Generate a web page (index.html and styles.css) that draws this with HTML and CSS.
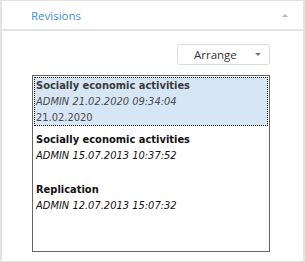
FILE: index.html
```html
<!DOCTYPE html>
<html lang="en">
<head>
    <title>Revisions</title>
    <link rel="stylesheet" href="styles.css">
</head>
<body>
    <div class="panel">
        <div class="panel-header">
            <span class="panel-title">Revisions</span>
            <span class="collapse-arrow"></span>
        </div>
        <div class="panel-body">
            <div class="toolbar">
                <button class="dropdown-btn">
                    <span>Arrange</span>
                    <span class="caret"></span>
                </button>
            </div>
            <div class="revision-list">
                <div class="revision revision--selected">
                    <div class="revision-name">Socially economic activities</div>
                    <div class="revision-meta">ADMIN 21.02.2020 09:34:04</div>
                    <div class="revision-date">21.02.2020</div>
                </div>
                <div class="revision">
                    <div class="revision-name">Socially economic activities</div>
                    <div class="revision-meta">ADMIN 15.07.2013 10:37:52</div>
                </div>
                <div class="revision">
                    <div class="revision-name">Replication</div>
                    <div class="revision-meta">ADMIN 12.07.2013 15:07:32</div>
                </div>
            </div>
        </div>
    </div>
</body>
</html>
```

FILE: styles.css
```css
body{
    margin: 0;
    background: #ffffff;
    font-family: "Open Sans", Roboto, sans-serif;
}

.panel{
    height: 262px;
    box-sizing: border-box;
    border: 2px solid #e4e4e4;
    border-bottom-width: 1px;
    border-top-width: 1px;
    display: flex;
    flex-direction: column;
}

.panel-header{
    height: 28px;
    border-bottom: 2px solid #e4e4e4;
    display: flex;
    align-items: center;
    padding: 0 15px 0 29px;
}

.panel-title{
    flex-grow: 1;
    color: #3d8fd8;
    font-size: 11.5px;
}

.collapse-arrow{
    width: 0;
    height: 0;
    border-left: 3px solid transparent;
    border-right: 3px solid transparent;
    border-bottom: 3px solid #b5b5b5;
}

.panel-body{
    padding: 13px 33px 0 30px;
}

.toolbar{
    display: flex;
    justify-content: flex-end;
    margin-bottom: 10px;
}

.dropdown-btn{
    width: 93px;
    height: 21px;
    border: 1px solid #dcdcdc;
    border-radius: 3px;
    background: #ffffff;
    display: flex;
    align-items: center;
    justify-content: space-between;
    padding: 0 8px 0 16px;
    font-family: "Open Sans", Roboto, sans-serif;
    font-size: 11.5px;
    color: #333333;
}

.caret{
    width: 0;
    height: 0;
    border-left: 3px solid transparent;
    border-right: 3px solid transparent;
    border-top: 3px solid #777777;
}

.revision-list{
    height: 177px;
    box-sizing: border-box;
    border: 1px solid #656565;
    padding: 1px 1px 0 1px;
    font-family: "DejaVu Sans Condensed", "DejaVu Sans", sans-serif;
    font-size: 11px;
    line-height: 16px;
}

.revision{
    border: 1px dotted transparent;
    padding: 0 0 0 1px;
    height: 48px;
    color: #111111;
}

.revision--selected{
    background: #d6e6f5;
    border-color: #111111;
    color: #4a4a4a;
    height: 47px;
    margin-bottom: 5px;
}

.revision-name{
    font-weight: bold;
}

.revision--selected .revision-name{
    color: #3a3a3a;
}

.revision-meta{
    font-style: italic;
}
```
